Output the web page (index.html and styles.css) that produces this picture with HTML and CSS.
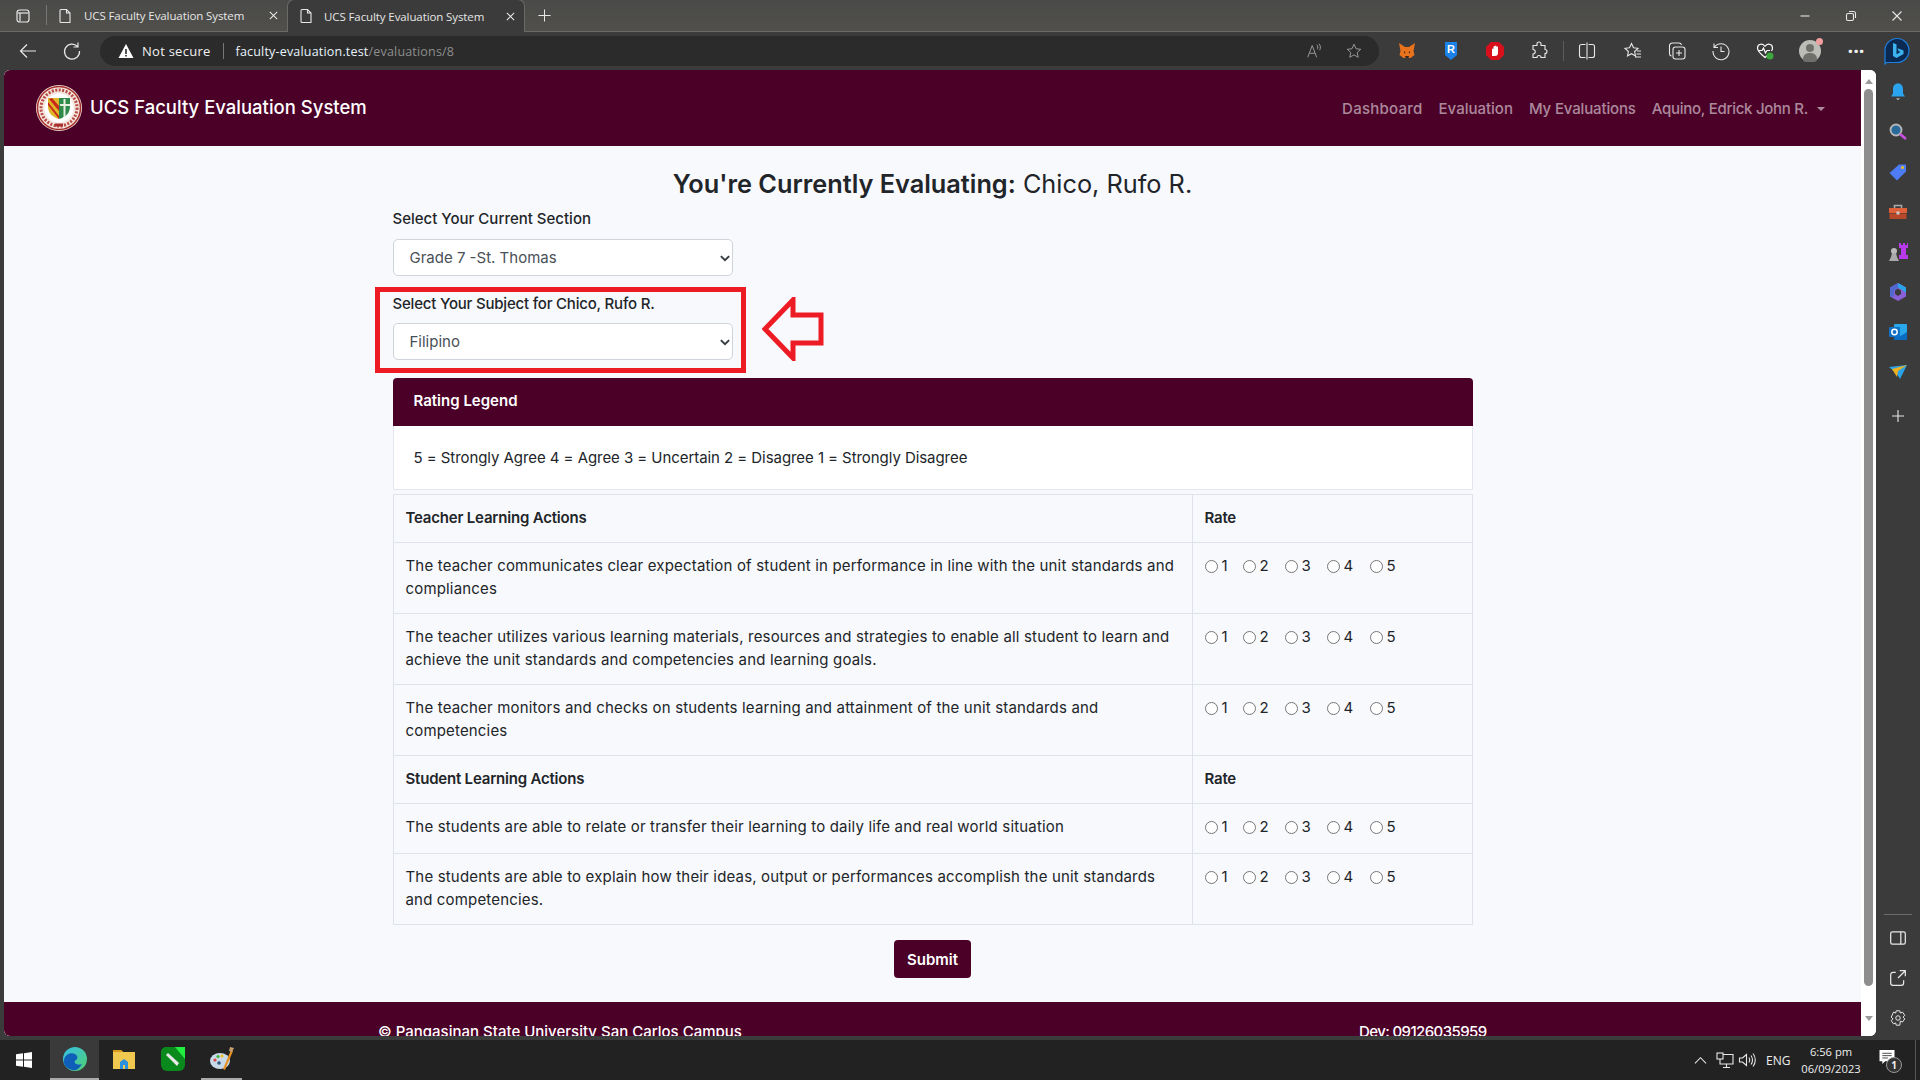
FILE: index.html
```html
<!DOCTYPE html>
<html lang="en">
<head>
<meta charset="utf-8">
<title>UCS Faculty Evaluation System</title>
<link rel="stylesheet" href="styles.css">
</head>
<body>
<div class="tabstrip">
  <svg class="ico tabs-btn" viewBox="0 0 16 16"><rect x="2" y="2" width="12" height="12" rx="2.5"/><path d="M2.5 5h11"/><path d="M5 5v8.5"/></svg>
  <span class="tab-sep"></span>
  <div class="tab">
    <svg class="ico doc" viewBox="0 0 16 16"><path d="M4 1.5h5.5L13 5v9.5H4a1 1 0 0 1-1-1v-11a1 1 0 0 1 1-1z M9.5 1.5V5H13"/></svg>
    <span class="tab-title">UCS Faculty Evaluation System</span>
    <svg class="ico tab-x" viewBox="0 0 12 12"><path d="M2 2l8 8M10 2l-8 8"/></svg>
  </div>
  <div class="tab tab-active">
    <svg class="ico doc" viewBox="0 0 16 16"><path d="M4 1.5h5.5L13 5v9.5H4a1 1 0 0 1-1-1v-11a1 1 0 0 1 1-1z M9.5 1.5V5H13"/></svg>
    <span class="tab-title">UCS Faculty Evaluation System</span>
    <svg class="ico tab-x" viewBox="0 0 12 12"><path d="M2 2l8 8M10 2l-8 8"/></svg>
  </div>
  <svg class="ico tab-plus" viewBox="0 0 16 16"><path d="M8 1.5v13M1.5 8h13"/></svg>
  <div class="win-controls">
    <svg class="ico" viewBox="0 0 12 12"><path d="M1.5 6h9"/></svg>
    <svg class="ico" viewBox="0 0 12 12"><rect x="1.5" y="3.5" width="7" height="7" rx="1.5"/><path d="M4 1.5h4.5a2 2 0 0 1 2 2V8"/></svg>
    <svg class="ico" viewBox="0 0 12 12"><path d="M1.5 1.5l9 9M10.5 1.5l-9 9"/></svg>
  </div>
</div>

<div class="toolbar">
  <svg class="ico nav-ico back" viewBox="0 0 20 20"><path d="M18 10H3M9 3.5L2.5 10 9 16.5"/></svg>
  <svg class="ico nav-ico reload" viewBox="0 0 20 20"><path d="M15.5 5.5A7.5 7.5 0 1 0 17.5 10M16 1.5v4.5h-4.5"/></svg>
  <div class="addressbar">
    <svg class="warn" viewBox="0 0 16 16"><path d="M8 1L15.5 15H.5z" fill="#fff"/><path d="M8 6v5M8 12v1.5" stroke="#2b2b2b" stroke-width="1.6"/></svg>
    <span class="not-secure">Not secure</span>
    <span class="addr-sep"></span>
    <span class="url">faculty-evaluation.test<span class="url-path">/evaluations/8</span></span>
    <span class="addr-tools">
      <svg class="ico dim read" viewBox="0 0 20 20"><path d="M3 17L8 4l5 13M4.8 12.5h6.4M13 3c1.5 1 1.5 4 .5 5M15.5 2c2 2 2 5 .8 7"/></svg>
      <svg class="ico dim" viewBox="0 0 20 20"><path d="M10 2.500l2.300 5 5.200.6-3.900 3.600 1.100 5.300-4.700-2.700-4.700 2.700 1.100-5.300-3.900-3.600 5.200-.6z"/></svg>
    </span>
  </div>
  <div class="ext-row">
    <span class="slot first-ext"><svg class="flat" viewBox="0 0 20 20"><path d="M2 2l6 4h4l6-4-1.500 8 1 4-4 3H6.500l-4-3 1-4z" fill="#e8731c"/><path d="M7 10l1.500 1.500L7 12.500zM13 10l-1.500 1.500 1.500 1zM8 15h4l-.5 2h-3z" fill="#3c2a1c"/></svg></span>
    <span class="slot"><svg class="flat" viewBox="0 0 20 20"><path d="M4 1h12v13l-6 5-6-5z" fill="#1a82e8"/><text x="10" y="12" class="ext-r">R</text></svg></span>
    <span class="slot"><svg class="flat" viewBox="0 0 20 20"><path d="M6 1h8l5 5v8l-5 5H6l-5-5V6z" fill="#d8101c"/><path d="M7 15V8a.8.8 0 0 1 1.500 0V5.500a.8.8 0 0 1 1.500 0V5a.8.8 0 0 1 1.500 0v1a.8.8 0 0 1 1.500 0v6c0 2-1 3-3 3z" fill="#fff"/></svg></span>
    <span class="slot"><svg class="ico" viewBox="0 0 20 20"><path d="M8 3a2 2 0 0 1 4 0v1.500h4v4a2 2 0 0 1 0 4v4h-4a2 2 0 0 0-4 0H4v-3.500a2 2 0 0 0 0-4.500V4.500h4z"/></svg></span>
    <span class="ext-sep"></span>
    <span class="slot"><svg class="ico" viewBox="0 0 20 20"><rect x="2.500" y="3.500" width="15" height="13" rx="2"/><path d="M10 1.500v17" stroke="#3b3b3b" stroke-width="3"/><path d="M10 1.500v17"/></svg></span>
    <span class="slot slot-fav"><svg class="ico" viewBox="0 0 20 20"><path d="M8.500 2.500l2 4.300 4.500.5-3.400 3.200.9 4.500-4-2.300-4 2.300.9-4.500L2 7.300l4.500-.5zM14 10h4M13.500 13h4.500M12 16h6"/></svg></span>
    <span class="slot"><svg class="ico" viewBox="0 0 20 20"><rect x="6" y="6" width="12" height="12" rx="2.500"/><path d="M12 9v6M9 12h6M4.500 15A2.500 2.500 0 0 1 2.500 12.500V5A3 3 0 0 1 5.500 2H12a2.500 2.500 0 0 1 2.500 2"/></svg></span>
    <span class="slot"><svg class="ico" viewBox="0 0 20 20"><path d="M3.500 6A8 8 0 1 1 2 10M3 2.500V6.500h4M10 5.500V10.500h3.500"/></svg></span>
    <span class="slot"><svg class="flat" viewBox="0 0 20 20"><path d="M10 5.500C8 2 2.500 2.500 2.500 7c0 3 3 6 7.500 9.500 1.500-1.200 3-2.400 4-3.500M10 5.500C12 2 17.500 2.500 17.500 7c0 1-.3 2-1 3M3 9.500h4l1.500-2.500 2 5 1.500-2.500h3" fill="none" stroke="#fff" stroke-width="1.200"/><circle cx="15" cy="15" r="3.500" fill="#3da63d"/></svg></span>
    <span class="slot slot-avatar"><span class="avatar"><span class="avatar-head"></span><span class="avatar-body"></span><span class="avatar-dot"></span></span></span>
    <span class="slot dots">···</span>
    <span class="slot bing-slot"><svg class="bing" viewBox="0 0 28 28"><path d="M14 1.500a12 12 0 0 1 0 24H3.500l-1.500 1.500v-13A12 12 0 0 1 14 1.500z" fill="#0b2a52" stroke="#1f7fe0" stroke-width="1.200"/><path d="M10 6l3.500 1.200v10l4-2.200-2-1-1-2.700 6 2.200v3.500L13.500 21 10 19z" fill="#3bb4f0"/></svg></span>
  </div>
</div>

<div class="workspace">
  <div class="viewport">
    <div class="page">
      <nav class="navbar">
        <div class="brand">
          <svg class="seal" viewBox="0 0 46 46">
            <circle cx="23" cy="23" r="23" fill="#f4e6de"/>
            <circle cx="23" cy="23" r="21.500" fill="none" stroke="#a8302c" stroke-width="1.500"/>
            <circle cx="23" cy="23" r="18" fill="none" stroke="#b84a44" stroke-width="3" stroke-dasharray="2 1.500"/>
            <circle cx="23" cy="23" r="14.500" fill="#fff"/>
            <path d="M12 13h11v21C16 32 12 28 12 21z" fill="#e0b428"/>
            <path d="M13 14l10 12v-5l-7-8zM12 20l11 14v-3L12 17z" fill="#c8281c"/>
            <path d="M23 13h11v8c0 7-4 11-11 13z" fill="#2e8a4a"/>
            <path d="M27.500 14h2v18h-2zM24 19h10v2H24z" fill="#e8efe0"/>
            <rect x="19" y="38.500" width="8" height="3" fill="#a8302c"/>
          </svg>
          <span class="brand-name">UCS Faculty Evaluation System</span>
        </div>
        <div class="nav-links">
          <a class="nav-link nav-dash">Dashboard</a>
          <a class="nav-link">Evaluation</a>
          <a class="nav-link nav-mine">My Evaluations</a>
          <a class="nav-link nav-user">Aquino, Edrick John R.<span class="caret"></span></a>
        </div>
      </nav>

      <main class="content">
        <h1 class="heading"><strong>You're Currently Evaluating:</strong> Chico, Rufo R.</h1>

        <div class="field field-first">
          <label class="field-label">Select Your Current Section</label>
          <div class="select-wrap">
            <select class="form-select"><option>Grade 7 -St. Thomas</option></select>
            <svg class="chev" viewBox="0 0 16 16"><path d="M2.500 5.500L8 11l5.500-5.500"/></svg>
          </div>
        </div>
        <div class="field field-second">
          <label class="field-label label-subject">Select Your Subject for Chico, Rufo R.</label>
          <div class="select-wrap">
            <select class="form-select"><option>Filipino</option></select>
            <svg class="chev" viewBox="0 0 16 16"><path d="M2.500 5.500L8 11l5.500-5.500"/></svg>
          </div>
          <span class="callout-box"></span>
          <svg class="callout-arrow" viewBox="0 0 62 64"><path d="M31 3L3 32l28 29V46h28V18H31z"/></svg>
        </div>

        <section class="legend">
          <header class="legend-head">Rating Legend</header>
          <div class="legend-body">5 = Strongly Agree 4 = Agree 3 = Uncertain 2 = Disagree 1 = Strongly Disagree</div>
        </section>

        <table class="rate-table">
          <colgroup><col class="col-q"><col class="col-r"></colgroup>
          <tbody>
            <tr class="head-row"><th>Teacher Learning Actions</th><th>Rate</th></tr>
            <tr class="row-two"><td>The teacher communicates clear expectation of student in performance in line with the unit standards and compliances</td><td><div class="radios"><label class="r1"><input type="radio" name="q1">1</label><label><input type="radio" name="q1">2</label><label><input type="radio" name="q1">3</label><label><input type="radio" name="q1">4</label><label><input type="radio" name="q1">5</label></div></td></tr>
            <tr class="row-two"><td>The teacher utilizes various learning materials, resources and strategies to enable all student to learn and achieve the unit standards and competencies and learning goals.</td><td><div class="radios"><label class="r1"><input type="radio" name="q2">1</label><label><input type="radio" name="q2">2</label><label><input type="radio" name="q2">3</label><label><input type="radio" name="q2">4</label><label><input type="radio" name="q2">5</label></div></td></tr>
            <tr class="row-two"><td>The teacher monitors and checks on students learning and attainment of the unit standards and competencies</td><td><div class="radios"><label class="r1"><input type="radio" name="q3">1</label><label><input type="radio" name="q3">2</label><label><input type="radio" name="q3">3</label><label><input type="radio" name="q3">4</label><label><input type="radio" name="q3">5</label></div></td></tr>
            <tr class="head-row"><th>Student Learning Actions</th><th>Rate</th></tr>
            <tr class="row-one"><td>The students are able to relate or transfer their learning to daily life and real world situation</td><td><div class="radios"><label class="r1"><input type="radio" name="q4">1</label><label><input type="radio" name="q4">2</label><label><input type="radio" name="q4">3</label><label><input type="radio" name="q4">4</label><label><input type="radio" name="q4">5</label></div></td></tr>
            <tr class="row-two"><td>The students are able to explain how their ideas, output or performances accomplish the unit standards and competencies.</td><td><div class="radios"><label class="r1"><input type="radio" name="q5">1</label><label><input type="radio" name="q5">2</label><label><input type="radio" name="q5">3</label><label><input type="radio" name="q5">4</label><label><input type="radio" name="q5">5</label></div></td></tr>
          </tbody>
        </table>

        <div class="submit-row"><button class="submit" type="button">Submit</button></div>
      </main>

      <footer class="footer">
        <span>© Pangasinan State University San Carlos Campus</span>
        <span class="footer-dev">Dev: 09126035959</span>
      </footer>
    </div>
    <div class="scrollbar">
      <span class="sb-up"></span>
      <span class="sb-thumb"></span>
      <span class="sb-down"></span>
    </div>
  </div>

  <aside class="sidebar">
    <div class="side-top">
      <svg class="side-ico" viewBox="0 0 20 20"><path d="M10 1.500c-3.500 0-5 2.500-5 6v4l-2 3h14l-2-3v-4c0-3.500-1.500-6-5-6z" fill="#2ba4f0"/><path d="M8 16.500h4l-2 1.500z" fill="#ddd"/></svg>
      <svg class="side-ico" viewBox="0 0 20 20"><circle cx="8" cy="8" r="5.500" fill="#2a6a98" stroke="#b8b8b8" stroke-width="1.800"/><path d="M12 12l6 5" stroke="#c850e0" stroke-width="2.800"/></svg>
      <svg class="side-ico" viewBox="0 0 20 20"><path d="M1.500 11L11 2.500h7v7L9 18.500z" fill="#4d7cf4"/><circle cx="14.500" cy="5.500" r="1.500" fill="#f0c020"/></svg>
      <svg class="side-ico" viewBox="0 0 20 20"><path d="M6.500 6V3.500h7V6" fill="none" stroke="#aaa" stroke-width="1.500"/><rect x="1" y="6" width="18" height="5" fill="#e0603a"/><rect x="1.500" y="11.500" width="17" height="5.500" fill="#b8482a"/><rect x="8.500" y="9.500" width="3" height="3" fill="#ccc"/></svg>
      <svg class="side-ico" viewBox="0 0 20 20"><circle cx="6" cy="9" r="3" fill="#bbb"/><path d="M4 11h4l1 4 2 4H1l2-4z" fill="#aaa"/><path d="M11 1h2v2h2V1h2v2h2V1h1v5h-2v7h2v4h-9v-4h2V6h-2z" fill="#b83ae8"/></svg>
      <svg class="side-ico" viewBox="0 0 20 20"><path d="M10 1l8 4.500v9L10 19l-8-4.500v-9z" fill="#8a60d8"/><path d="M10 1l8 4.500v5l-4-2.500-4-2.500z" fill="#2aa4e8"/><path d="M2 5.500L10 1v5L6 8.500v6l-4 0z" fill="#5068d0"/><path d="M7 8.500l3-2 3 2v3.500l-3 2-3-2z" fill="#3b3b3b"/></svg>
      <svg class="side-ico" viewBox="0 0 20 20"><rect x="6" y="2" width="13" height="16" rx="1" fill="#28a8ea"/><path d="M6 10l6.500 4L19 10v8H6z" fill="#0a6cc0"/><rect x="1" y="5" width="11" height="10" rx="1" fill="#0f70c8"/><circle cx="6.500" cy="10" r="2.700" fill="none" stroke="#fff" stroke-width="1.500"/></svg>
      <svg class="side-ico" viewBox="0 0 20 20"><path d="M1 5l18-2-7 14-3-5z" fill="#2aa4e8"/><path d="M4 7l15-4-9 6 -1 6z" fill="#f0b020"/></svg>
      <svg class="ico side-plus" viewBox="0 0 14 14"><path d="M7 1v12M1 7h12"/></svg>
    </div>
    <div class="side-bottom">
      <span class="side-sep"></span>
      <svg class="ico side-util" viewBox="0 0 16 16"><rect x="1.500" y="2.500" width="13" height="11" rx="1.500"/><path d="M10.500 2.500v11"/></svg>
      <svg class="ico side-util" viewBox="0 0 16 16"><path d="M6 3H3.500a2 2 0 0 0-2 2v7.500a2 2 0 0 0 2 2H11a2 2 0 0 0 2-2V10M8 8l6.500-6.500M9.500 1.500h5v5"/></svg>
      <svg class="ico side-util" viewBox="0 0 20 20"><circle cx="10" cy="10" r="2.500"/><path d="M8 2h4l.6 2.500 2.400-1 2.500 3.500-1.800 2 1.800 2-2.500 3.500-2.400-1L12 18H8l-.6-2.500-2.400 1L2.500 13l1.800-2-1.800-2L5 3.500l2.400 1z"/></svg>
    </div>
  </aside>
</div>

<div class="taskbar">
  <span class="task-start"><svg class="win-logo" viewBox="0 0 16 16"><path d="M0 2.300l7-1v6.300H0zM8 1.200L16 0v7.600H8zM0 8.400h7v6.300l-7-1zM8 8.400h8V16l-8-1.200z" fill="#fff"/></svg></span>
  <span class="task-item task-active"><svg class="task-ico" viewBox="0 0 24 24"><defs><linearGradient id="eg" x1="0" y1="0" x2="1" y2="1"><stop offset="0" stop-color="#36c0e8"/><stop offset="1" stop-color="#50d070"/></linearGradient></defs><circle cx="12" cy="12" r="12" fill="url(#eg)"/><path d="M1 13C2 7 8 5 12 7c3 1.500 3 5 1 6-1 .5-2 1-1 3 1 1.500 4 2 7 1-2.500 4-5.500 7-9 6-6-1-10-5-9-10z" fill="#0f5fb8"/></svg></span>
  <span class="task-item"><svg class="task-ico" viewBox="0 0 24 24"><path d="M1 3h8l2 2h12v17H1z" fill="#f0c850"/><path d="M1 3h8l2 2H1z" fill="#d89a18"/><path d="M8 22v-7l4-3 4 3v7h-3v-4h-2v4z" fill="#2a90e0"/></svg></span>
  <span class="task-item"><svg class="task-ico" viewBox="0 0 24 24"><path d="M5 0h19v18a6 6 0 0 1-6 6H6a6 6 0 0 1-6-6V5a5 5 0 0 1 5-5z" fill="#0a8a1c"/><path d="M14 0h10v12z" fill="#22f040"/><path d="M5 8l2-2 11 10-2 3z" fill="#e8e8e8"/></svg></span>
  <span class="task-item task-running"><svg class="task-ico" viewBox="0 0 24 24"><ellipse cx="10" cy="14" rx="10" ry="8" fill="#c8dae8"/><circle cx="5" cy="13" r="1.600" fill="#e04040"/><circle cx="8" cy="9.500" r="1.600" fill="#40b040"/><circle cx="12" cy="9" r="1.600" fill="#f0c020"/><circle cx="9" cy="16" r="1.800" fill="#2a5a80"/><path d="M21 3l2 1-8 19-2-1z" fill="#e89020"/><path d="M20 0l4 1-2 4-3-1z" fill="#c8a070"/></svg></span>
  <div class="tray">
    <svg class="ico tray-chev" viewBox="0 0 14 14"><path d="M1 10l6-6 6 6"/></svg>
    <svg class="ico tray-net" viewBox="0 0 18 18"><rect x="1" y="2" width="6" height="6"/><path d="M7 3.500h10V13H4V8M10.500 13v3M7 16.500h7"/></svg>
    <svg class="ico tray-vol" viewBox="0 0 18 18"><path d="M1.500 7v4h3l4 3.500v-11l-4 3.500zM11 6.500c1 1.500 1 3.500 0 5M13 4.500c2 2.500 2 6.500 0 9M15 2.500c3 3.500 3 9.500 0 13"/></svg>
    <span class="tray-lang">ENG</span>
    <span class="clock"><span>6:56 pm</span><span>06/09/2023</span></span>
    <span class="notif">
      <svg class="notif-ico" viewBox="0 0 16 16"><path d="M0 0h16v12H6l-3 3v-3H0z" fill="#fff"/><path d="M3 3.500h10M3 6h10M3 8.500h6" stroke="#444" stroke-width="1"/></svg>
      <span class="notif-badge">1</span>
    </span>
    <span class="show-desk"></span>
  </div>
</div>
</body>
</html>
```

FILE: styles.css
```css
* { box-sizing: border-box; }
html, body { margin: 0; height: 100%; }
body {
  width: 1920px; height: 1080px; overflow: hidden;
  display: flex; flex-direction: column;
  background: #3b3b3b;
  font-family: "Open Sans", "Noto Sans", sans-serif;
  color: #fff;
}
.ico { fill: none; stroke: #e8e8e8; stroke-width: 1.1; display: block; }
.flat { width: 20px; height: 20px; display: block; }

/* tab strip */
.tabstrip {
  height: 32px; flex: none; display: flex; align-items: flex-end;
  background: linear-gradient(#4a4a48, #504f4c);
  border-bottom: 1px solid #6a6a68;
  padding-left: 15px; position: relative;
}
.tabs-btn { width: 16px; height: 16px; margin-bottom: 7px; stroke-width: 1.200; }
.tab-sep { width: 1px; height: 20px; background: #777; margin: 0 0 6px 15px; }
.tab {
  width: 241px; height: 31px; display: flex; align-items: center;
  padding: 0 0 0 10px; font-size: 11.500px; color: #e6e6e6;
}
.doc { width: 16px; height: 16px; flex: none; margin-right: 11px; }
.tab-title { flex: 1; white-space: nowrap; letter-spacing: -.1px; }
.tab-x { width: 11px; height: 11px; flex: none; margin-right: 9px; }
.tab-active {
  width: 236px; background: #3b3b3b; border-radius: 6px 6px 0 0;
  height: 32px; margin-bottom: -1px; padding-left: 10px;
  box-shadow: 0 0 0 1px #6a6a68;
}
.tab-active .doc { margin-right: 10px; }
.tab-active .tab-x { margin-right: 8px; }
.tab-plus { width: 15px; height: 15px; margin: 0 0 8px 13px; }
.win-controls { margin-left: auto; display: flex; align-items: center; margin-bottom: 9px; }
.win-controls .ico { width: 12px; height: 12px; margin-right: 34px; }
.win-controls .ico:last-child { margin-right: 17px; }

/* toolbar */
.toolbar { height: 38px; flex: none; display: flex; align-items: center; background: #3b3b3b; position: relative; }
.nav-ico { width: 20px; height: 20px; stroke-width: 1.200; }
.back { margin-left: 18px; }
.reload { margin-left: 24px; }
.addressbar {
  width: 1279px; height: 30px; margin-left: 18px;
  background: #2b2b2b; border-radius: 15px;
  display: flex; align-items: center; padding-left: 18px; font-size: 13px;
}
.warn { width: 16px; height: 16px; flex: none; }
.not-secure { margin-left: 8px; color: #f0f0f0; letter-spacing: .02em; }
.addr-sep { width: 1px; height: 16px; background: #777; margin: 0 12px; }
.url { color: #e8f4fc; font-size: 12.500px; letter-spacing: .015em; }
.url-path { color: #8d8d8d; }
.addr-tools { margin-left: auto; display: flex; align-items: center; gap: 22px; padding-right: 16px; }
.dim { width: 18px; height: 18px; stroke: #999; }
.ext-row { display: flex; align-items: center; flex: 1; height: 100%; }
.slot { width: 44px; flex: none; display: flex; justify-content: center; align-items: center; }
.slot .ico { width: 20px; height: 20px; }
.first-ext { margin-left: 6px; }
.slot-fav { margin-left: 2px; }
.slot-avatar { margin-left: 1px; }
.ext-r { font: 700 11px "Liberation Sans", sans-serif; fill: #fff; text-anchor: middle; }
.ext-sep { width: 1px; height: 20px; background: #5c5c5c; margin: 0 1px 0 2px; }
.avatar { width: 22px; height: 22px; border-radius: 50%; background: #bdbdb8; position: relative; display: block; }
.avatar-head { position: absolute; left: 7px; top: 4px; width: 8px; height: 8px; border-radius: 50%; background: #6f6f6c; }
.avatar-body { position: absolute; left: 4px; top: 13px; width: 14px; height: 9px; border-radius: 7px 7px 4px 4px; background: #6f6f6c; }
.avatar-dot { position: absolute; right: -2px; top: -2px; width: 7px; height: 7px; border-radius: 50%; background: #f0a0a0; }
.dots { font-size: 20px; font-weight: 700; color: #eee; line-height: 1; margin-left: 2px; }
.bing { width: 28px; height: 28px; display: block; }
.bing-slot { width: 40px; margin-left: -1px; }

/* workspace */
.workspace { height: 970px; flex: none; display: flex; }
.viewport { width: 1872px; height: 966px; margin-left: 4px; flex: none; display: flex; border-radius: 6px; overflow: hidden; background: #fff; }
.page { width: 1857px; height: 966px; flex: none; overflow: hidden; background: #f8f9fc; font-family: Inter, "Open Sans", sans-serif; color: #212529; display: flex; flex-direction: column; font-size: 15px; }
.scrollbar { flex: 1; background: #fff; display: flex; flex-direction: column; align-items: center; padding: 9px 0 8px; }
.sb-up { width: 0; height: 0; border: 4px solid transparent; border-top: 0; border-bottom: 5px solid #9a9a9a; margin-bottom: 5px; }
.sb-thumb { width: 9px; height: 897px; background: #8e8e8e; border-radius: 5px; }
.sb-down { width: 0; height: 0; border: 4px solid transparent; border-bottom: 0; border-top: 5px solid #9a9a9a; margin-top: 30px; }

/* navbar */
.navbar { height: 76px; flex: none; background: #4b0028; display: flex; align-items: center; justify-content: space-between; padding: 0 36px 0 32px; }
.brand { display: flex; align-items: center; gap: 8px; }
.seal { width: 46px; height: 46px; display: block; }
.brand-name { color: #fff; font-size: 18.500px; font-weight: 500; white-space: nowrap; margin-top: -2px; }
.nav-links { display: flex; gap: 16px; }
.nav-link { color: rgba(255,255,255,.55); font-size: 15px; font-weight: 500; white-space: nowrap; }
.nav-dash { letter-spacing: .25px; }
.nav-mine { letter-spacing: -.15px; }
.nav-user { letter-spacing: -.27px; }
.caret { display: inline-block; width: 0; height: 0; border: 4px solid transparent; border-bottom: 0; border-top: 4px solid rgba(255,255,255,.55); margin-left: 9px; vertical-align: 3px; }

/* content */
.content { width: 1080px; margin: 0 auto; flex: 1; }
.heading { margin: 19px 0 0; height: 38px; line-height: 38px; font-size: 25.300px; font-weight: 400; text-align: center; white-space: nowrap; color: #212529; }
.heading strong { font-weight: 600; }
.field { position: relative; }
.field-first { margin-top: 4px; }
.field-label { display: block; height: 23px; line-height: 23px; font-size: 15px; font-weight: 500; white-space: nowrap; }
.label-subject { letter-spacing: -.2px; }
.field-first .select-wrap { margin-top: 9px; }
.field-second { margin-top: 16px; }
.field-second .select-wrap { margin-top: 8px; }
.select-wrap { position: relative; width: 340px; }
.form-select {
  appearance: none; -webkit-appearance: none; display: block; width: 100%; height: 37px;
  border: 1px solid #ced4da; border-radius: 5px; background: #fff; padding: 0 36px 0 16px;
  font: 400 15px Inter, "Open Sans", sans-serif; color: #495057;
}
.chev { position: absolute; right: 2px; top: 13px; width: 12px; height: 12px; fill: none; stroke: #343a40; stroke-width: 2.500; }
.callout-box { position: absolute; left: -18px; top: -5px; width: 371px; height: 86px; border: 5px solid #ed1c24; pointer-events: none; }
.callout-arrow { position: absolute; left: 369px; top: 5px; width: 62px; height: 64px; fill: none; stroke: #ed1c24; stroke-width: 5; }

/* legend */
.legend { margin-top: 18px; border: 1px solid #e3e6ef; border-radius: 4px 4px 0 0; background: #fff; }
.legend-head { height: 48px; line-height: 46px; background: #4b0028; color: #fff; padding-left: 21px; font-weight: 600; font-size: 15px; margin: -1px -1px 0; border-radius: 4px 4px 0 0; }
.legend-body { height: 63px; line-height: 63px; padding-left: 20px; font-size: 15px; letter-spacing: -.06px; }

/* table */
.rate-table { width: 100%; margin-top: 4px; border-collapse: collapse; table-layout: fixed; font-size: 15px; line-height: 22.500px; }
.col-r { width: 280px; }
.rate-table th, .rate-table td { border: 1px solid #dee2ea; padding: 0 12px; text-align: left; vertical-align: top; }
.rate-table th { font-weight: 600; padding-top: 12px; letter-spacing: -.2px; }
.head-row { height: 48px; }
.row-two { height: 71px; }
.row-one { height: 50px; }
.rate-table td { padding-top: 12px; letter-spacing: .17px; }
.radios { display: flex; gap: 11px; height: 23px; align-items: center; letter-spacing: 0; }
.radios label { display: flex; align-items: center; width: 31px; }
.radios .r1 { width: 27px; }
.radios label:last-child { margin-left: 1px; }
.radios input { width: 13px; height: 13px; margin: 0 4px 0 0; accent-color: #4b0028; }

/* submit + footer */
.submit-row { display: flex; justify-content: center; margin-top: 15px; }
.submit { width: 77px; height: 38px; border: 0; border-radius: 4px; background: #4b0028; color: #fff; font: 600 15px Inter, "Open Sans", sans-serif; }
.footer { height: 34px; flex: none; background: #4b0028; color: #fff; font-weight: 500; font-size: 15px; line-height: 18px; display: flex; padding: 21px 0 0 374px; white-space: nowrap; }
.footer span:first-child { width: 981px; }
.footer-dev { letter-spacing: -.6px; }

/* sidebar */
.sidebar { flex: 1; display: flex; flex-direction: column; height: 966px; align-items: center; justify-content: space-between; }
.side-top { display: flex; flex-direction: column; align-items: center; gap: 20px; padding-top: 12px; }
.side-ico { width: 20px; height: 20px; display: block; }
.side-plus { width: 14px; height: 14px; margin-top: 7px; }
.side-bottom { display: flex; flex-direction: column; align-items: center; gap: 22px; padding-bottom: 9px; }
.side-sep { width: 28px; height: 1px; background: #6c6c6c; margin-bottom: -8px; }
.side-util { width: 18px; height: 18px; }

/* taskbar */
.taskbar { height: 40px; flex: none; background: #222; display: flex; align-items: stretch; position: relative; }
.task-start { width: 50px; display: flex; align-items: center; justify-content: center; padding-right: 3px; }
.win-logo { width: 16px; height: 16px; }
.task-item { width: 49px; display: flex; align-items: center; justify-content: center; border-bottom: 2px solid transparent; }
.task-active { background: #3a3a3a; border-bottom-color: #aaa; }
.task-running { position: relative; }
.task-running::after { content: ""; position: absolute; left: 4px; right: 4px; bottom: -2px; height: 2px; background: #aaa; }
.task-ico { width: 24px; height: 24px; display: block; }
.tray { margin-left: auto; display: flex; align-items: center; }
.tray-chev { width: 13px; height: 13px; margin-right: 9px; }
.tray-net { width: 18px; height: 18px; margin-right: 4px; }
.tray-vol { width: 18px; height: 18px; margin-right: 10px; }
.tray-lang { font-size: 12px; color: #eee; width: 33px; }
.clock { display: flex; flex-direction: column; align-items: center; font-size: 11.200px; line-height: 17px; color: #eee; width: 64px; }
.notif { position: relative; width: 24px; height: 24px; margin-left: 16px; }
.notif-ico { width: 16px; height: 15px; position: absolute; left: 0; top: 2px; }
.notif-badge { position: absolute; left: 7px; top: 9px; width: 16px; height: 16px; border-radius: 50%; background: #333; border: 1px solid #999; font-size: 10px; line-height: 14px; text-align: center; color: #eee; font-weight: 700; }
.show-desk { width: 1px; height: 100%; background: #555; margin-left: 12px; margin-right: 4px; }
```
